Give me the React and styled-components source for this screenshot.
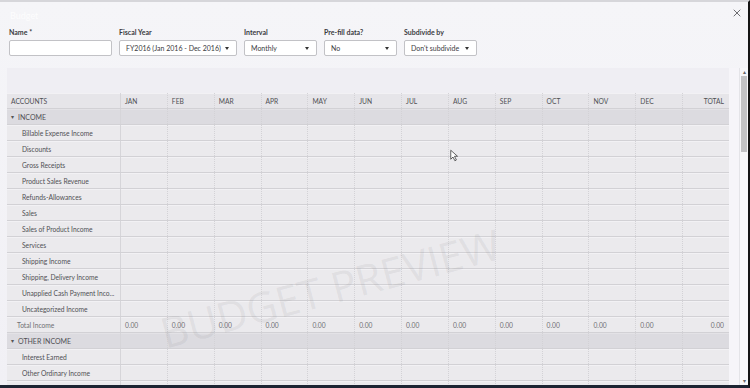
import React from 'react'
import styled, { createGlobalStyle } from 'styled-components'
import { X } from 'lucide-react'

const GlobalStyle = createGlobalStyle`
  html, body {
    margin: 0;
    padding: 0;
    background: #111;
  }
  * {
    box-sizing: border-box;
  }
`

const MONTHS = ['JAN', 'FEB', 'MAR', 'APR', 'MAY', 'JUN', 'JUL', 'AUG', 'SEP', 'OCT', 'NOV', 'DEC']

const income = [
  'Billable Expense Income',
  'Discounts',
  'Gross Receipts',
  'Product Sales Revenue',
  'Refunds-Allowances',
  'Sales',
  'Sales of Product Income',
  'Services',
  'Shipping Income',
  'Shipping, Delivery Income',
  'Unapplied Cash Payment Inco...',
  'Uncategorized Income',
]

const otherIncome = ['Interest Earned', 'Other Ordinary Income', '']

const App = () => {
  return (
    <>
      <GlobalStyle />
      <Page>
        <TopBar>
          <Title>Budget</Title>
          <CloseButton>
            <X size={12} strokeWidth={1.6} />
          </CloseButton>
        </TopBar>

        <Form>
          <Field width="103px">
            <Label>Name *</Label>
            <Input />
          </Field>
          <Field width="118px">
            <Label>Fiscal Year</Label>
            <Select>
              <span>FY2016 (Jan 2016 - Dec 2016)</span>
              <Caret />
            </Select>
          </Field>
          <Field width="73px">
            <Label>Interval</Label>
            <Select>
              <span>Monthly</span>
              <Caret />
            </Select>
          </Field>
          <Field width="73px">
            <Label>Pre-fill data?</Label>
            <Select>
              <span>No</span>
              <Caret />
            </Select>
          </Field>
          <Field width="73px">
            <Label>Subdivide by</Label>
            <Select>
              <span>Don't subdivide</span>
              <Caret />
            </Select>
          </Field>
        </Form>

        <Panel>
          <Main>
            <Toolbar />
            <Table>
              <Row kind="header">
                <Cell kind="header">ACCOUNTS</Cell>
                {MONTHS.map((m) => (
                  <Cell key={m} kind="header">{m}</Cell>
                ))}
                <Cell kind="header" right>TOTAL</Cell>
              </Row>

              <Row kind="section">
                <Cell kind="section"><Toggle>▾</Toggle>INCOME</Cell>
                {Array.from({ length: 13 }).map((_, i) => <Cell key={i} />)}
              </Row>
              {income.map((name) => (
                <Row key={name}>
                  <Cell kind="item">{name}</Cell>
                  {Array.from({ length: 13 }).map((_, i) => <Cell key={i} />)}
                </Row>
              ))}
              <Row>
                <Cell kind="total">Total Income</Cell>
                {MONTHS.map((m) => (
                  <Cell key={m} kind="value">0.00</Cell>
                ))}
                <Cell kind="value" right>0.00</Cell>
              </Row>

              <Row kind="section">
                <Cell kind="section"><Toggle>▾</Toggle>OTHER INCOME</Cell>
                {Array.from({ length: 13 }).map((_, i) => <Cell key={i} />)}
              </Row>
              {otherIncome.map((name, idx) => (
                <Row key={idx}>
                  <Cell kind="item">{name}</Cell>
                  {Array.from({ length: 13 }).map((_, i) => <Cell key={i} />)}
                </Row>
              ))}
            </Table>
          </Main>
          <Gutter />
          <Scrollbar>
            <ScrollArrow>▴</ScrollArrow>
            <Track>
              <Thumb />
            </Track>
            <ScrollArrow>▾</ScrollArrow>
          </Scrollbar>
        </Panel>

        <Watermark>BUDGET PREVIEW</Watermark>
        <Pointer viewBox="0 0 12 16" width="9" height="13">
          <path d="M1 1 L1 13 L4 10 L6.5 15 L8.5 14 L6 9 L10 9 Z" fill="#fff" stroke="#333" strokeWidth="1" />
        </Pointer>
      </Page>
    </>
  )
}

const Page = styled.div`
  position: relative;
  width: 750px;
  height: 388px;
  overflow: hidden;
  display: flex;
  flex-direction: column;
  background: linear-gradient(#f5f5f8, #f1f0f5);
  border-top: 2px solid #d6d6da;
  border-right: 2px solid #141414;
  border-bottom: 3px solid #1d2432;
  font-family: Lato, 'Open Sans', sans-serif;
  color: #3a3a3e;
`

const TopBar = styled.div`
  flex-shrink: 0;
  height: 26px;
  display: flex;
  align-items: center;
  justify-content: space-between;
  padding: 0 5px 0 10px;
`

const Title = styled.div`
  font-size: 9px;
  color: rgba(255, 255, 255, 0.8);
`

const CloseButton = styled.div`
  display: flex;
  color: #4a4a4e;
  margin-top: -4px;
`

const Form = styled.div`
  flex-shrink: 0;
  display: flex;
  gap: 7px;
  padding: 0 0 0 9px;
`

const Field = styled.div`
  width: ${(p) => p.width};
  display: flex;
  flex-direction: column;
  gap: 3px;
`

const Label = styled.div`
  font-size: 7px;
  font-weight: 700;
  color: #3b3b3f;
  line-height: 9px;
  height: 9px;
`

const Input = styled.div`
  height: 16px;
  background: #fff;
  border: 1px solid #c2c2c6;
  border-radius: 2px;
`

const Select = styled(Input)`
  display: flex;
  align-items: center;
  justify-content: space-between;
  padding: 0 7px 0 6px;
  font-size: 7px;
  color: #3a3a3e;
  white-space: nowrap;
`

const Caret = styled.span`
  width: 0;
  height: 0;
  border-left: 2.5px solid transparent;
  border-right: 2.5px solid transparent;
  border-top: 3px solid #333;
`

const Panel = styled.div`
  flex: 1;
  display: flex;
  margin: 12px 0 0 7px;
  min-height: 0;
`

const Main = styled.div`
  width: 722px;
  display: flex;
  flex-direction: column;
`

const Toolbar = styled.div`
  flex-shrink: 0;
  height: 25px;
  background: #efeef3;
`

const Table = styled.div`
  flex-shrink: 0;
  display: flex;
  flex-direction: column;
`

const rowBg = {
  header: '#e6e5e9',
  section: '#dcdbe0',
  item: '#ebeaed',
}

const Row = styled.div`
  flex-shrink: 0;
  display: grid;
  grid-template-columns: 113px repeat(13, 1fr);
  height: 16px;
  background: ${(p) => rowBg[p.kind || 'item']};
  border-bottom: 1px solid #d2d1d5;
  box-shadow: inset 0 1px 0 ${(p) => (p.kind === 'section' ? '#e3e2e6' : '#f2f1f4')};
`

const cellPad = {
  header: '0 0 0 4px',
  section: '0 0 0 4px',
  item: '0 0 0 15px',
  total: '0 0 0 10px',
  value: '0 0 0 4px',
}

const Cell = styled.div`
  display: flex;
  align-items: center;
  justify-content: ${(p) => (p.right ? 'flex-end' : 'flex-start')};
  padding: ${(p) => (p.right ? '0 5px 0 0' : cellPad[p.kind] || '0')};
  font-size: ${(p) => (p.kind === 'section' ? '7px' : '6.7px')};
  color: ${(p) => (p.kind === 'value' || p.kind === 'total' ? '#707074' : '#505054')};
  white-space: nowrap;
  overflow: hidden;
  border-left: 1px dotted #d3d2d6;

  &:first-child {
    border-left: none;
  }
  &:nth-child(2) {
    border-left: 1px solid #d6d5d9;
  }
`

const Toggle = styled.span`
  font-size: 6px;
  margin-right: 4px;
  color: #555;
`

const Gutter = styled.div`
  width: 10px;
  background: #f6f5f9;
`

const Scrollbar = styled.div`
  width: 9px;
  display: flex;
  flex-direction: column;
  background: #f7f7f9;
  border-left: 1px solid #e4e4e8;
`

const ScrollArrow = styled.div`
  height: 8px;
  font-size: 6px;
  line-height: 8px;
  text-align: center;
  color: #666;
`

const Track = styled.div`
  flex: 1;
  padding: 0 1px;
`

const Thumb = styled.div`
  height: 76px;
  background: #c2c2c4;
`

const Watermark = styled.div`
  position: absolute;
  left: 156px;
  top: 311px;
  font-size: 42px;
  line-height: 1;
  font-family: 'Open Sans', sans-serif;
  font-weight: 400;
  color: rgba(120, 120, 125, 0.11);
  transform: rotate(-15deg);
  transform-origin: left top;
  white-space: nowrap;
  pointer-events: none;
`

const Pointer = styled.svg`
  position: absolute;
  left: 450px;
  top: 147px;
`

export default App
